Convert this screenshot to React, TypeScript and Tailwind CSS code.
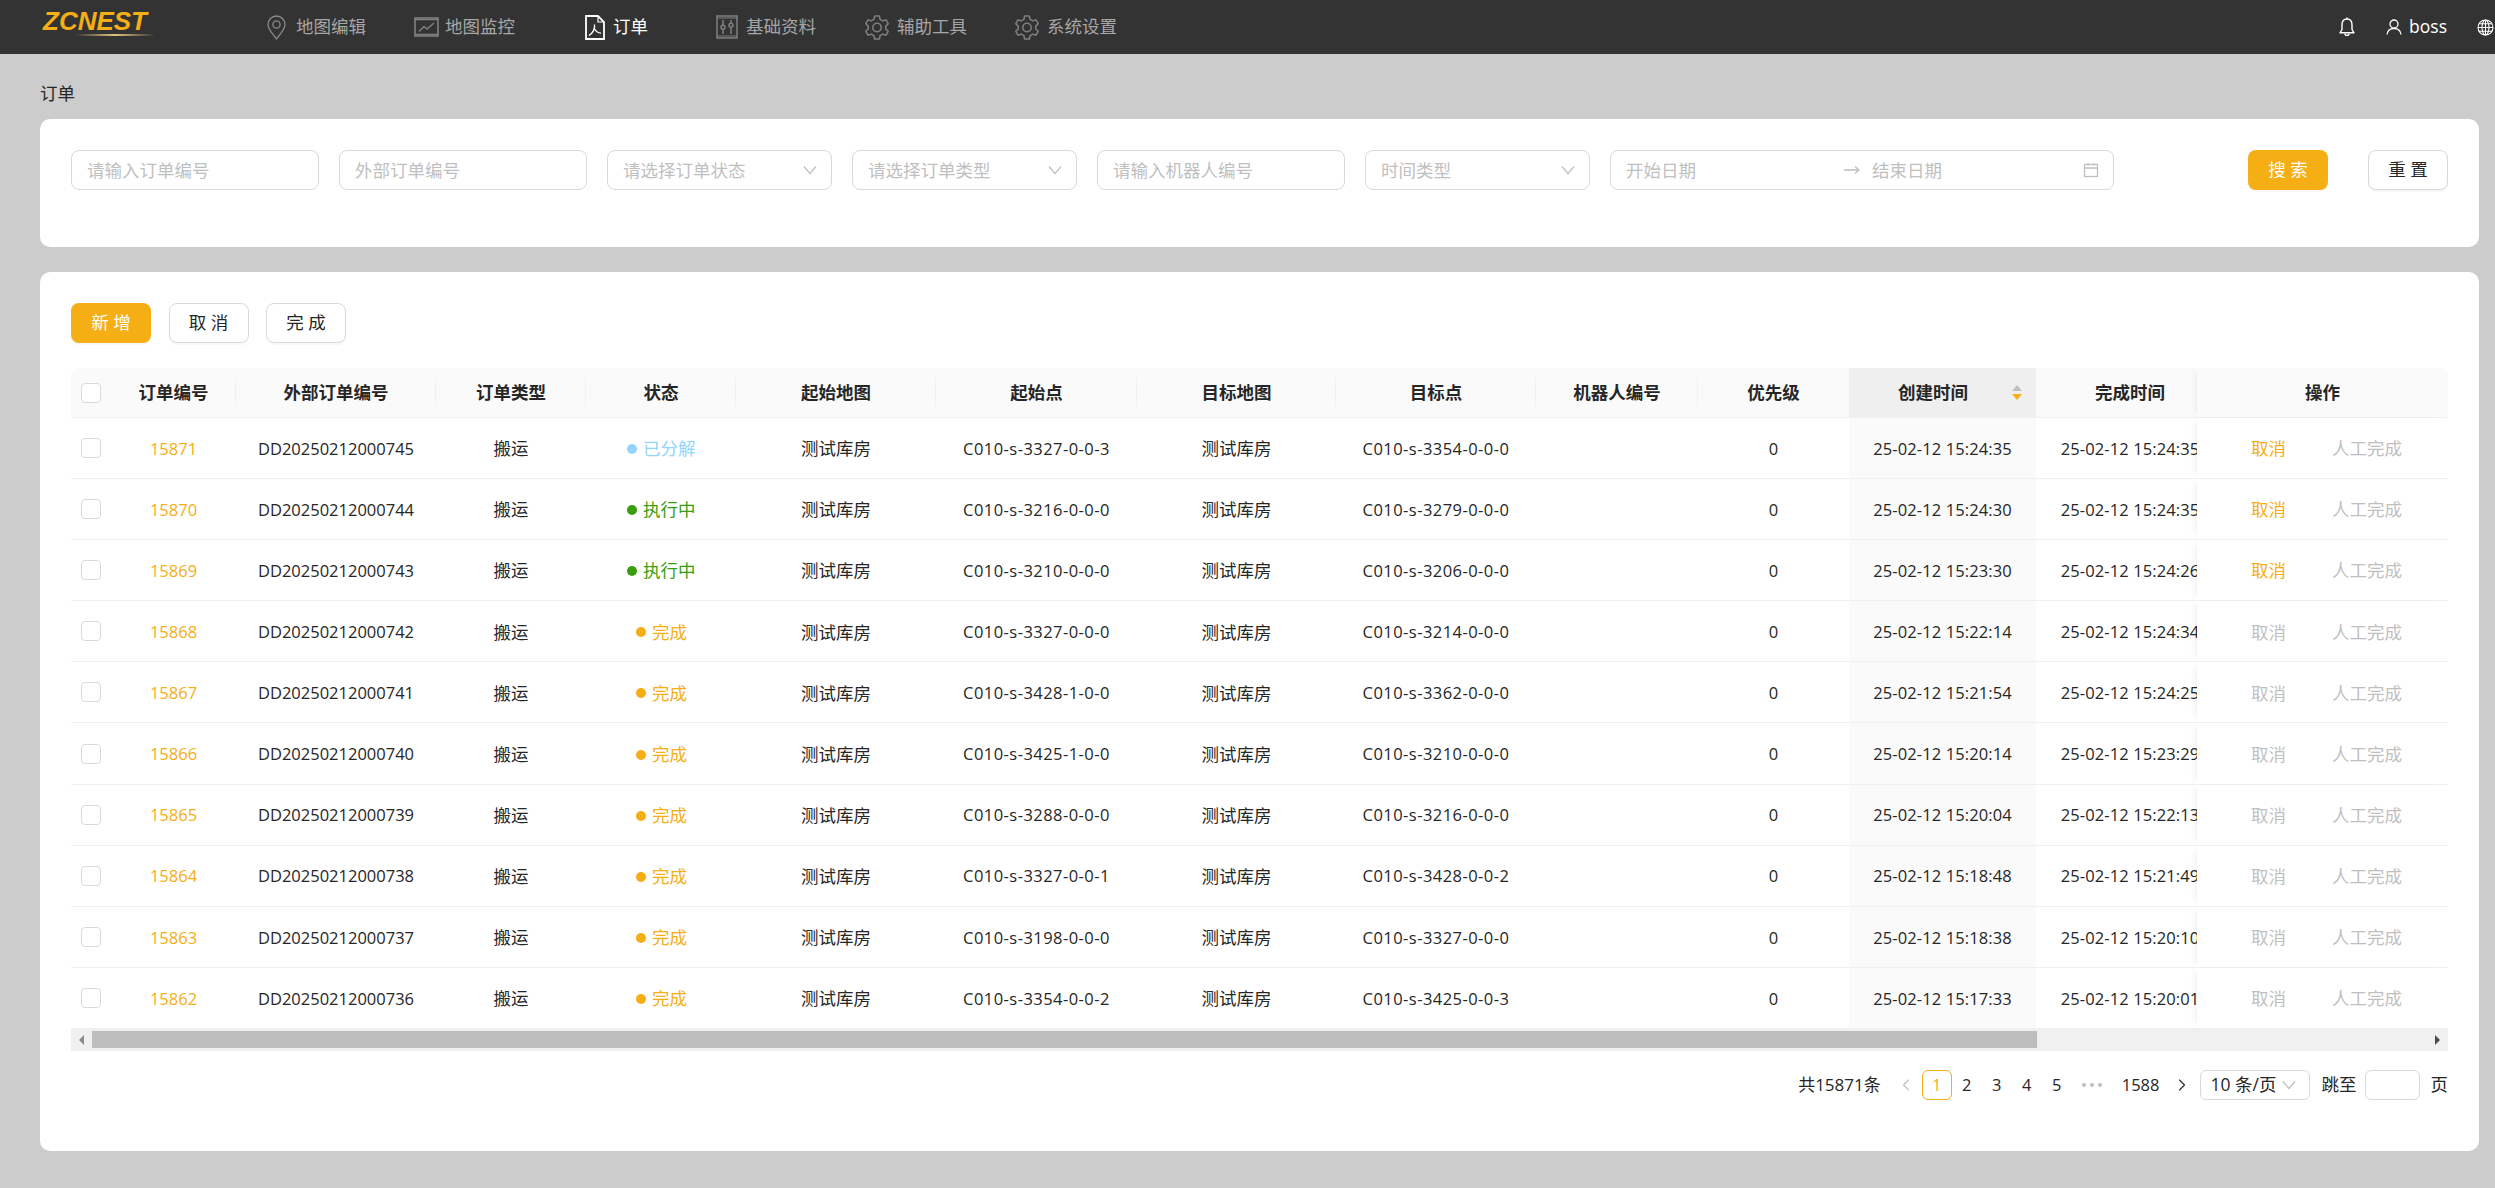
import { ChevronLeft, ChevronRight } from "lucide-react"

const orange = "#f5ae14"

type Status = "split" | "running" | "done"

type Row = {
  id: string
  ext: string
  status: Status
  from: string
  to: string
  created: string
  finished: string
}

const rows: Row[] = [
  { id: "15871", ext: "DD20250212000745", status: "split", from: "C010-s-3327-0-0-3", to: "C010-s-3354-0-0-0", created: "25-02-12 15:24:35", finished: "25-02-12 15:24:35" },
  { id: "15870", ext: "DD20250212000744", status: "running", from: "C010-s-3216-0-0-0", to: "C010-s-3279-0-0-0", created: "25-02-12 15:24:30", finished: "25-02-12 15:24:35" },
  { id: "15869", ext: "DD20250212000743", status: "running", from: "C010-s-3210-0-0-0", to: "C010-s-3206-0-0-0", created: "25-02-12 15:23:30", finished: "25-02-12 15:24:26" },
  { id: "15868", ext: "DD20250212000742", status: "done", from: "C010-s-3327-0-0-0", to: "C010-s-3214-0-0-0", created: "25-02-12 15:22:14", finished: "25-02-12 15:24:34" },
  { id: "15867", ext: "DD20250212000741", status: "done", from: "C010-s-3428-1-0-0", to: "C010-s-3362-0-0-0", created: "25-02-12 15:21:54", finished: "25-02-12 15:24:25" },
  { id: "15866", ext: "DD20250212000740", status: "done", from: "C010-s-3425-1-0-0", to: "C010-s-3210-0-0-0", created: "25-02-12 15:20:14", finished: "25-02-12 15:23:29" },
  { id: "15865", ext: "DD20250212000739", status: "done", from: "C010-s-3288-0-0-0", to: "C010-s-3216-0-0-0", created: "25-02-12 15:20:04", finished: "25-02-12 15:22:13" },
  { id: "15864", ext: "DD20250212000738", status: "done", from: "C010-s-3327-0-0-1", to: "C010-s-3428-0-0-2", created: "25-02-12 15:18:48", finished: "25-02-12 15:21:49" },
  { id: "15863", ext: "DD20250212000737", status: "done", from: "C010-s-3198-0-0-0", to: "C010-s-3327-0-0-0", created: "25-02-12 15:18:38", finished: "25-02-12 15:20:10" },
  { id: "15862", ext: "DD20250212000736", status: "done", from: "C010-s-3354-0-0-2", to: "C010-s-3425-0-0-3", created: "25-02-12 15:17:33", finished: "25-02-12 15:20:01" },
]

const statusStyle = {
  split: { label: "已分解", dot: "bg-[#91d5ff]", text: "text-[#91d5ff]", wrap: "pl-[41px]" },
  running: { label: "执行中", dot: "bg-[#389e0d]", text: "text-[#389e0d]", wrap: "pl-[41px]" },
  done: { label: "完成", dot: "bg-[#f5ae14]", text: "text-[#f5ae14]", wrap: "pl-[50px]" },
}

const gridCols = "grid grid-cols-[40px_125px_200px_150px_150px_200px_201px_199px_200px_162px_151px_187px_161px_251px]"

function PinIcon() {
  return (
    <svg width="19" height="25" viewBox="0 0 19 25" fill="none" stroke="#8c8c8c" strokeWidth="1.3">
      <path d="M9.5 24 C6 19 1 14.5 1 9.5 A8.5 8.5 0 0 1 18 9.5 C18 14.5 13 19 9.5 24Z" />
      <circle cx="9.5" cy="9.5" r="3.6" />
    </svg>
  )
}

function ChartIcon() {
  return (
    <svg width="25" height="20" viewBox="0 0 25 20" fill="none" stroke="#808080" strokeWidth="1.6">
      <rect x="1" y="1" width="23" height="18" />
      <path d="M1 2.6H24M1 17.4H24" strokeWidth="1.3" />
      <path d="M5 14.5 L10 9.5 L13 12 L20 6" strokeWidth="1.4" />
    </svg>
  )
}

function OrderIcon() {
  return (
    <svg width="20" height="25" viewBox="0 0 20 25" fill="none" stroke="#ffffff" strokeWidth="1.8">
      <path d="M1 1H13L19 7V24H1Z" />
      <path d="M13 1V7H19" strokeWidth="1.2" />
      <path d="M9.5 9.5C10 13 9 17 4 20.5M9.5 14C11 16.5 13 18 16 18.2" strokeWidth="1.3" />
    </svg>
  )
}

function SlidersIcon() {
  return (
    <svg width="22" height="24" viewBox="0 0 22 24" fill="none" stroke="#808080" strokeWidth="1.5">
      <rect x="1" y="1" width="20" height="22" />
      <path d="M1 3H21M1 21H21" strokeWidth="1.2" />
      <path d="M7 5V10M7 14.5V19M15 5V8M15 12.5V19" />
      <circle cx="7" cy="12.2" r="2" />
      <circle cx="15" cy="10.2" r="2" />
    </svg>
  )
}

function GearIcon() {
  return (
    <svg width="24" height="25" viewBox="0 0 24 25" fill="none" stroke="#808080" strokeWidth="1.5" strokeLinejoin="round">
      <path d="M9.6 1H14.4L15.1 4.4L17.7 5.9L21 4.8L23.3 8.8L20.7 11.1V13.9L23.3 16.2L21 20.2L17.7 19.1L15.1 20.6L14.4 24H9.6L8.9 20.6L6.3 19.1L3 20.2L0.7 16.2L3.3 13.9V11.1L0.7 8.8L3 4.8L6.3 5.9L8.9 4.4Z" />
      <circle cx="12" cy="12.5" r="4.2" />
    </svg>
  )
}

function BellIcon() {
  return (
    <svg width="16" height="20" viewBox="0 0 16 20" fill="none" stroke="#ffffff" strokeWidth="1.4">
      <path d="M8 2C4.5 2 3 4.5 3 8V12.5L1 15.8H15L13 12.5V8C13 4.5 11.5 2 8 2Z" strokeLinejoin="round" />
      <path d="M8 0.5V2M6 16.5C6 19 10 19 10 16.5" />
    </svg>
  )
}

function UserIcon() {
  return (
    <svg width="16" height="16" viewBox="0 0 16 16" fill="none" stroke="#ffffff" strokeWidth="1.3">
      <circle cx="8" cy="5" r="4" />
      <path d="M1 15.5C1.5 11.5 4.5 9.5 8 9.5C11.5 9.5 14.5 11.5 15 15.5" />
    </svg>
  )
}

function GlobeIcon() {
  return (
    <svg width="17" height="17" viewBox="0 0 17 17" fill="none" stroke="#ffffff" strokeWidth="1.1">
      <circle cx="8.5" cy="8.5" r="7.5" />
      <ellipse cx="8.5" cy="8.5" rx="3.5" ry="7.5" />
      <path d="M8.5 1V16M1 8.5H16M2 4.7H15M2 12.3H15" />
    </svg>
  )
}

function CalendarIcon() {
  return (
    <svg width="16" height="16" viewBox="0 0 16 16" fill="none" stroke="#bfbfbf" strokeWidth="1.3">
      <rect x="1.5" y="2.5" width="13" height="12" />
      <path d="M1.5 6H14.5M5 1V3.5M11 1V3.5" />
    </svg>
  )
}

function Caret() {
  return (
    <svg width="14" height="10" viewBox="0 0 14 10" fill="none" stroke="#bfbfbf" strokeWidth="1.2">
      <path d="M1 1.5L7 8.5L13 1.5" />
    </svg>
  )
}

function Logo() {
  return (
    <div className="relative h-[30px] w-[113px]">
      <svg width="108" height="28" viewBox="0 0 108 28" className="absolute left-0 top-[-4px]">
        <text x="1" y="22" textLength="104" lengthAdjust="spacingAndGlyphs" fill={orange} fontFamily="Liberation Sans" fontStyle="italic" fontWeight="700" fontSize="25">
          ZCNEST
        </text>
      </svg>
      <div className="absolute left-[33px] top-[22px] h-[1.5px] w-[80px] bg-gradient-to-r from-transparent via-[#e6c27a] to-transparent" />
    </div>
  )
}

const navItems = [
  { label: "地图编辑", icon: <PinIcon />, width: "w-[147px]", gap: "gap-[10px]" },
  { label: "地图监控", icon: <ChartIcon />, width: "w-[171px]", gap: "gap-[6px]" },
  { label: "订单", icon: <OrderIcon />, width: "w-[131px]", gap: "gap-[8px]", active: true },
  { label: "基础资料", icon: <SlidersIcon />, width: "w-[149px]", gap: "gap-[8px]" },
  { label: "辅助工具", icon: <GearIcon />, width: "w-[150px]", gap: "gap-[8px]" },
  { label: "系统设置", icon: <GearIcon />, width: "w-[150px]", gap: "gap-[8px]" },
]

function TopBar() {
  return (
    <header className="flex h-[54px] items-center bg-[#333333] pl-[42px]">
      <Logo />
      <nav className="ml-[112px] flex items-center">
        {navItems.map((item) => (
          <div key={item.label} className={`flex items-center ${item.width} ${item.gap}`}>
            {item.icon}
            <span className={item.active ? "text-white" : "text-[#a6a6a6]"}>{item.label}</span>
          </div>
        ))}
      </nav>
      <div className="ml-auto flex items-center">
        <BellIcon />
        <div className="ml-[31px] flex items-center gap-[7px] text-white">
          <UserIcon />
          <span>boss</span>
        </div>
        <div className="ml-[30px] mr-[1px]">
          <GlobeIcon />
        </div>
      </div>
    </header>
  )
}

function TextField({ placeholder, width }: { placeholder: string; width: string }) {
  return (
    <div className={`flex h-10 items-center rounded-[8px] border border-[#d9d9d9] bg-white px-[15px] pt-[2px] text-[#bfbfbf] ${width}`}>
      {placeholder}
    </div>
  )
}

function SelectField({ placeholder }: { placeholder: string }) {
  return (
    <div className="flex h-10 w-[225px] items-center justify-between rounded-[8px] border border-[#d9d9d9] bg-white pl-[15px] pr-[14px] text-[#bfbfbf]">
      <span className="pt-[2px]">{placeholder}</span>
      <Caret />
    </div>
  )
}

function Btn({ label, primary }: { label: string; primary?: boolean }) {
  return (
    <button
      type="button"
      className={`h-10 w-20 rounded-[8px] shadow-[0_2px_0_rgba(0,0,0,0.03)] ${primary ? "bg-[#f5ae14] text-white" : "border border-[#d9d9d9] bg-white text-[#262626]"}`}
    >
      {label}
    </button>
  )
}

function SearchCard() {
  return (
    <section className="flex h-[128px] items-start rounded-[10px] bg-white px-[31px] pt-[31px]">
      <div className="flex items-center gap-5">
        <TextField placeholder="请输入订单编号" width="w-[248px]" />
        <TextField placeholder="外部订单编号" width="w-[248px]" />
        <SelectField placeholder="请选择订单状态" />
        <SelectField placeholder="请选择订单类型" />
        <TextField placeholder="请输入机器人编号" width="w-[248px]" />
        <SelectField placeholder="时间类型" />
        <div className="flex h-10 w-[504px] items-center rounded-[8px] border border-[#d9d9d9] bg-white pl-[15px] pr-[14px] text-[#bfbfbf]">
          <span className="w-[218px] pt-[2px]">开始日期</span>
          <svg width="16" height="10" viewBox="0 0 16 10" fill="none" stroke="#bfbfbf" strokeWidth="1.3">
            <path d="M0 5H15M11 1.5L15 5L11 8.5" />
          </svg>
          <span className="ml-[12px] pt-[2px]">结束日期</span>
          <span className="ml-auto">
            <CalendarIcon />
          </span>
        </div>
      </div>
      <div className="ml-auto flex gap-10">
        <Btn label="搜 索" primary />
        <Btn label="重 置" />
      </div>
    </section>
  )
}

function Checkbox() {
  return <div className="mx-auto h-5 w-5 rounded-[4px] border border-[#d9d9d9] bg-white" />
}

const headers = ["订单编号", "外部订单编号", "订单类型", "状态", "起始地图", "起始点", "目标地图", "目标点", "机器人编号", "优先级"]

function TableHead() {
  return (
    <div className={`${gridCols} h-[50px] border-b border-[#f0f0f0] bg-[#fafafa] font-bold text-[#262626]`}>
      <div className="flex items-center">
        <Checkbox />
      </div>
      {headers.map((h, i) => (
        <div key={h} className="relative flex items-center justify-center">
          {h}
          {i < headers.length - 1 && <div className="absolute right-0 top-[10px] h-[28px] w-px bg-[#f0f0f0]" />}
        </div>
      ))}
      <div className="flex items-center bg-[#efefef] pl-[49px] pr-[14px]">
        创建时间
        <div className="ml-auto flex flex-col gap-[3px]">
          <div className="h-0 w-0 border-x-[5px] border-b-[6px] border-x-transparent border-b-[#bfbfbf]" />
          <div className="h-0 w-0 border-x-[5px] border-t-[6px] border-x-transparent border-t-[#f5ae14]" />
        </div>
      </div>
      <div className="flex items-center overflow-hidden">
        <div className="w-[188px] shrink-0 text-center">完成时间</div>
      </div>
      <div className="z-10 flex items-center justify-center bg-[#fafafa] shadow-[-6px_0_6px_-4px_rgba(0,0,0,0.06)]">操作</div>
    </div>
  )
}

function TableRow({ row, live }: { row: Row; live: boolean }) {
  const s = statusStyle[row.status]
  const num = "flex items-center justify-center pt-[2px] text-[16.5px]"
  const code = "flex items-center justify-center pt-[2px] text-[16.5px] tracking-[0.45px]"
  const plain = "flex items-center justify-center pt-[2px]"
  return (
    <div className={`${gridCols} h-[61.1px] border-b border-[#f0f0f0] text-[#262626]`}>
      <div className="flex items-center">
        <Checkbox />
      </div>
      <div className={`${num} text-[#f5ae14]`}>{row.id}</div>
      <div className={num}>{row.ext}</div>
      <div className={plain}>搬运</div>
      <div className={`flex items-center pt-[2px] ${s.wrap} ${s.text}`}>
        <span className={`mr-[6px] h-[10px] w-[10px] rounded-full ${s.dot}`} />
        {s.label}
      </div>
      <div className={plain}>测试库房</div>
      <div className={code}>{row.from}</div>
      <div className={plain}>测试库房</div>
      <div className={code}>{row.to}</div>
      <div />
      <div className={num}>0</div>
      <div className={`${num} bg-[#fafafa] tracking-[0.1px]`}>{row.created}</div>
      <div className="flex items-center overflow-hidden pt-[2px] text-[16.5px] tracking-[0.1px]">
        <div className="w-[188px] shrink-0 text-center">{row.finished}</div>
      </div>
      <div className="z-10 flex items-center bg-white pl-[54px] pt-[2px] text-[#bfbfbf] shadow-[-6px_0_6px_-4px_rgba(0,0,0,0.06)]">
        <span className={live ? "text-[#f5ae14]" : ""}>取消</span>
        <span className="ml-[46px]">人工完成</span>
      </div>
    </div>
  )
}

function ScrollBar() {
  return (
    <div className="flex h-[22px] items-center bg-[#f0f0f0]">
      <div className="flex w-[21px] justify-center">
        <div className="h-0 w-0 border-y-[5px] border-r-[5px] border-y-transparent border-r-[#8c8c8c]" />
      </div>
      <div className="h-[17px] w-[1945px] bg-[#bdbdbd]" />
      <div className="ml-auto flex w-[21px] justify-center">
        <div className="h-0 w-0 border-y-[5px] border-l-[5px] border-y-transparent border-l-[#4d4d4d]" />
      </div>
    </div>
  )
}

function Pager() {
  return (
    <div className="mt-[19px] flex h-[30px] items-center text-[#262626]">
      <div className="ml-auto text-[17px]">共15871条</div>
      <ChevronLeft className="ml-[15px]" size={20} strokeWidth={1.3} color="#bfbfbf" />
      <div className="ml-[6px] flex h-[30px] w-[30px] items-center justify-center rounded-[6px] border border-[#f5ae14] text-[16.5px] text-[#f5ae14]">1</div>
      <div className="flex text-[16.5px]">
        <span className="w-[30px] text-center">2</span>
        <span className="w-[30px] text-center">3</span>
        <span className="w-[30px] text-center">4</span>
        <span className="w-[30px] text-center">5</span>
      </div>
      <div className="ml-[10px] flex gap-[4px]">
        <span className="h-[4px] w-[4px] rounded-full bg-[#bfbfbf]" />
        <span className="h-[4px] w-[4px] rounded-full bg-[#bfbfbf]" />
        <span className="h-[4px] w-[4px] rounded-full bg-[#bfbfbf]" />
      </div>
      <span className="ml-[20px] text-[16.5px]">1588</span>
      <ChevronRight className="ml-[12px]" size={20} strokeWidth={1.3} color="#262626" />
      <div className="ml-[8px] flex h-[30px] w-[110px] items-center justify-between rounded-[6px] border border-[#d9d9d9] pl-[10px] pr-[13px]">
        10 条/页
        <Caret />
      </div>
      <span className="ml-[12px]">跳至</span>
      <div className="ml-[8px] h-[30px] w-[55px] rounded-[6px] border border-[#d9d9d9]" />
      <span className="ml-[11px]">页</span>
    </div>
  )
}

export default function App() {
  return (
    <div className="min-h-[1188px] bg-[#cccccc] font-['Open_Sans','Noto_Sans_CJK_SC',sans-serif] text-[17.5px] leading-none">
      <TopBar />
      <main className="pl-10 pr-4">
        <div className="flex h-[65px] items-center pt-[14px] text-[#262626]">订单</div>
        <SearchCard />
        <section className="mt-[25px] h-[879px] rounded-[10px] bg-white px-[31px] pt-[31px]">
          <div className="flex gap-[17.5px]">
            <Btn label="新 增" primary />
            <Btn label="取 消" />
            <Btn label="完 成" />
          </div>
          <div className="mt-[25px] overflow-hidden rounded-t-[8px]">
            <TableHead />
            {rows.map((row, i) => (
              <TableRow key={row.id} row={row} live={i < 3} />
            ))}
          </div>
          <ScrollBar />
          <Pager />
        </section>
      </main>
    </div>
  )
}
